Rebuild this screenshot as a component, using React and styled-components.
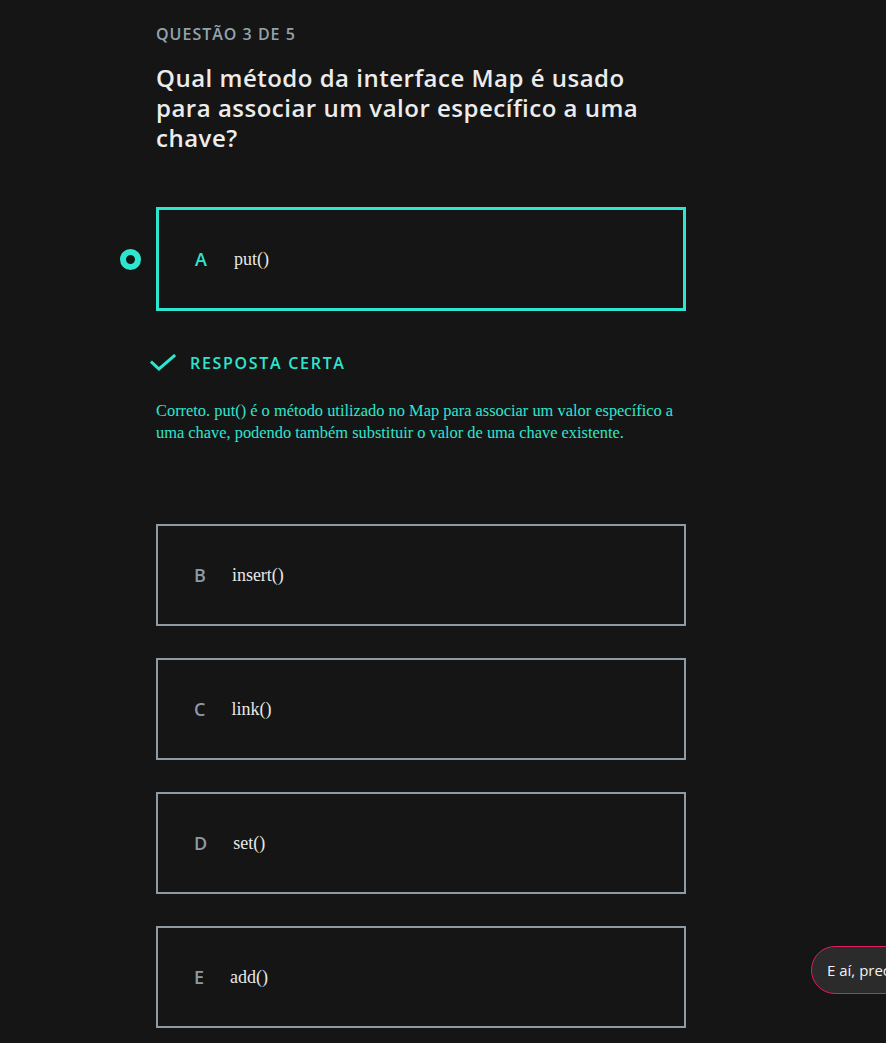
import React from 'react';
import styled, { createGlobalStyle } from 'styled-components';

const Global = createGlobalStyle`
  html, body {
    margin: 0;
    padding: 0;
    background: #151515;
  }
  body {
    font-family: 'Liberation Serif', serif;
  }
`;

const Page = styled.div`
  min-height: 1043px;
  background: #151515;
  padding: 23px 0 0 156px;
  box-sizing: border-box;
`;

const Column = styled.div`
  width: 530px;
  display: flex;
  flex-direction: column;
`;

const Counter = styled.div`
  font-family: 'Open Sans', sans-serif;
  font-weight: 600;
  font-size: 16px;
  letter-spacing: 1px;
  color: #93a3ad;
  line-height: 22px;
`;

const Title = styled.h1`
  margin: 18px 0 0;
  font-family: 'Open Sans', sans-serif;
  font-weight: 600;
  font-size: 24px;
  letter-spacing: 0.5px;
  line-height: 30px;
  color: #ececec;
  width: 505px;
`;

const Options = styled.div`
  display: flex;
  flex-direction: column;
  margin-top: 54px;
`;

const Row = styled.div`
  display: flex;
  align-items: center;
  gap: 15px;
  margin-left: -36px;
  margin-top: ${p => p.$top || 0}px;
`;

const Radio = styled.span`
  width: 21px;
  height: 21px;
  box-sizing: border-box;
  border-radius: 50%;
  border: 6px solid ${p => (p.$on ? '#2ee6cf' : 'transparent')};
  flex: none;
`;

const Card = styled.div`
  flex: 1;
  height: ${p => (p.$on ? 104 : 102)}px;
  box-sizing: border-box;
  border: ${p => (p.$on ? '3px solid #2ee6cf' : '2px solid #8c9ba6')};
  display: flex;
  align-items: center;
  padding-left: 36px;
`;

const Letter = styled.span`
  font-family: 'Open Sans', sans-serif;
  font-weight: 600;
  font-size: 18px;
  margin-right: ${p => (p.$on ? 27 : 26)}px;
  color: ${p => (p.$on ? '#2ee6cf' : '#8c9ba6')};
`;

const Label = styled.span`
  font-family: 'Liberation Serif', serif;
  font-size: 18px;
  color: #e8e8e8;
`;

const Feedback = styled.div`
  display: flex;
  align-items: center;
  gap: 14px;
  margin: 41px 0 0 -6px;
  font-family: 'Open Sans', sans-serif;
  font-weight: 600;
  font-size: 16px;
  letter-spacing: 1.7px;
  color: #2ee6cf;
`;

const Explain = styled.p`
  margin: 26px 0 0;
  font-family: 'Liberation Serif', serif;
  font-size: 16.4px;
  line-height: 22px;
  color: #2ee6cf;
`;

const Chat = styled.div`
  position: fixed;
  left: 811px;
  top: 946px;
  height: 48px;
  padding: 0 24px 0 15px;
  box-sizing: border-box;
  border: 1px solid #e31c5f;
  border-radius: 24px;
  background: #2b2b2b;
  display: flex;
  align-items: center;
  white-space: nowrap;
  font-family: 'Open Sans', sans-serif;
  font-size: 15px;
  color: #f2f2f2;
`;

const others = [
  ['B', 'insert()'],
  ['C', 'link()'],
  ['D', 'set()'],
  ['E', 'add()'],
];

export default function App() {
  return (
    <Page>
      <Global />
      <Column>
        <Counter>QUESTÃO 3 DE 5</Counter>
        <Title>Qual método da interface Map é usado para associar um valor específico a uma chave?</Title>
        <Options>
          <Row>
            <Radio $on />
            <Card $on>
              <Letter $on>A</Letter>
              <Label>put()</Label>
            </Card>
          </Row>
          <Feedback>
            <svg width="26" height="18" viewBox="0 0 26 18" fill="none">
              <path d="M2 8.5 L9 15 L24 2" stroke="#2ee6cf" strokeWidth="3" strokeLinecap="square" />
            </svg>
            RESPOSTA CERTA
          </Feedback>
          <Explain>
            Correto. put() é o método utilizado no Map para associar um valor específico a uma chave, podendo também substituir o valor de uma chave existente.
          </Explain>
          {others.map(([l, t], i) => (
            <Row key={l} $top={i === 0 ? 80 : 32}>
              <Radio />
              <Card>
                <Letter>{l}</Letter>
                <Label>{t}</Label>
              </Card>
            </Row>
          ))}
        </Options>
      </Column>
      <Chat>E aí, precisa de ajuda?</Chat>
    </Page>
  );
}
